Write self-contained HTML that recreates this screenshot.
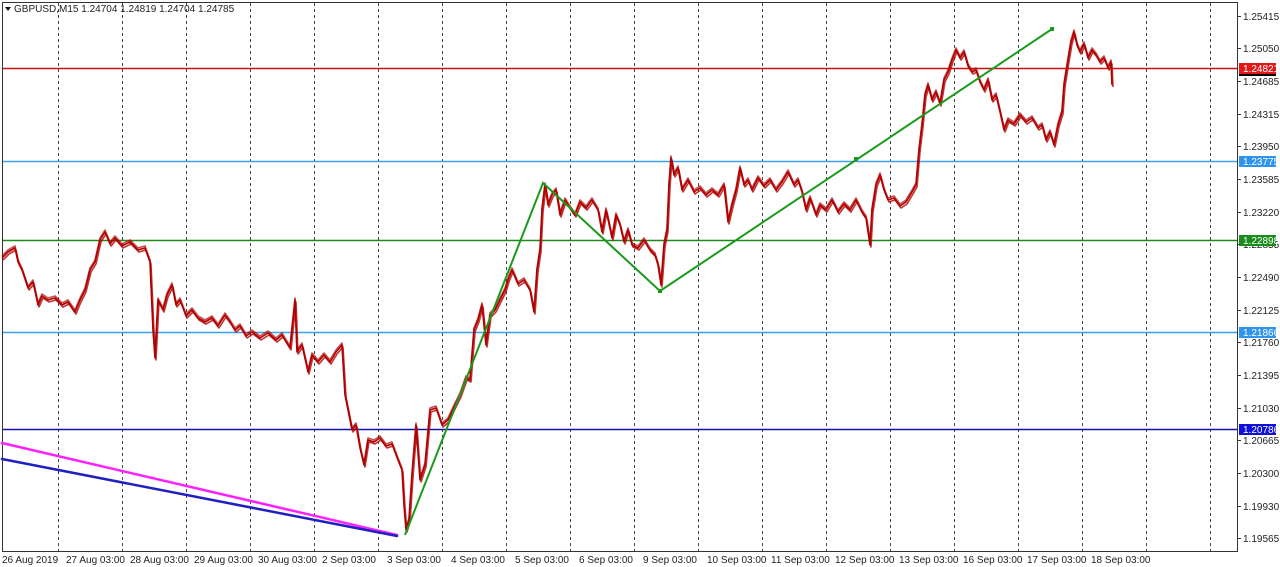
<!DOCTYPE html>
<html><head><meta charset="utf-8"><style>
html,body{margin:0;padding:0;background:#fff;width:1280px;height:567px;overflow:hidden}
svg{display:block}
text{font-family:"Liberation Sans",sans-serif;font-size:10px;fill:#222}
</style></head><body>
<svg width="1280" height="567" viewBox="0 0 1280 567">
<rect x="0" y="0" width="1280" height="567" fill="#fff"/>
<g stroke="#444" stroke-width="1" stroke-dasharray="3,3">
<line x1="58.5" y1="3" x2="58.5" y2="551"/><line x1="122.5" y1="3" x2="122.5" y2="551"/><line x1="186.5" y1="3" x2="186.5" y2="551"/><line x1="250.5" y1="3" x2="250.5" y2="551"/><line x1="314.5" y1="3" x2="314.5" y2="551"/><line x1="378.5" y1="3" x2="378.5" y2="551"/><line x1="442.5" y1="3" x2="442.5" y2="551"/><line x1="506.5" y1="3" x2="506.5" y2="551"/><line x1="570.5" y1="3" x2="570.5" y2="551"/><line x1="634.5" y1="3" x2="634.5" y2="551"/><line x1="698.5" y1="3" x2="698.5" y2="551"/><line x1="762.5" y1="3" x2="762.5" y2="551"/><line x1="826.5" y1="3" x2="826.5" y2="551"/><line x1="890.5" y1="3" x2="890.5" y2="551"/><line x1="954.5" y1="3" x2="954.5" y2="551"/><line x1="1018.5" y1="3" x2="1018.5" y2="551"/><line x1="1082.5" y1="3" x2="1082.5" y2="551"/><line x1="1146.5" y1="3" x2="1146.5" y2="551"/><line x1="1210.5" y1="3" x2="1210.5" y2="551"/>
</g>
<rect x="2.5" y="2.5" width="1235" height="549" fill="none" stroke="#333" stroke-width="1"/>
<line x1="3" y1="68.5" x2="1237" y2="68.5" stroke="#d01010" stroke-width="1.5"/>
<line x1="3" y1="161.5" x2="1237" y2="161.5" stroke="#3fa0e8" stroke-width="1.5"/>
<line x1="3" y1="240.5" x2="1237" y2="240.5" stroke="#1e8a1e" stroke-width="1.5"/>
<line x1="3" y1="332.5" x2="1237" y2="332.5" stroke="#3fa0e8" stroke-width="1.5"/>
<line x1="3" y1="429.5" x2="1237" y2="429.5" stroke="#1010b0" stroke-width="1.5"/>
<g fill="none" stroke-linejoin="round">
<polyline id="p" stroke="#b00000" stroke-width="1.6" points="2,258 8,252 15,248 18,262 22,270 28,288 33,282 38,305 42,296 48,300 55,298 62,305 68,302 75,312 80,300 85,290 90,270 95,262 100,240 105,232 110,244 115,238 122,246 130,242 138,250 145,248 150,262 153,330 155,358 158,300 163,310 167,295 172,285 176,305 180,300 186,316 192,310 198,318 205,322 212,318 218,326 225,315 230,322 235,330 240,326 246,336 252,332 260,338 268,333 276,340 282,335 290,348 295,300 297,352 302,345 308,372 312,355 318,362 324,355 330,362 336,352 342,345 345,395 348,410 352,430 356,425 360,448 364,465 368,440 374,442 380,438 386,446 392,444 398,460 402,470 404,505 406,530 409,520 412,475 416,425 420,480 425,465 430,410 436,408 442,425 448,420 455,405 460,395 466,378 470,380 474,330 478,320 482,305 486,345 490,315 495,310 500,300 505,290 508,280 512,270 518,284 524,280 530,290 534,312 537,270 540,250 542,210 545,185 548,205 552,195 556,190 560,215 565,200 570,208 575,215 580,202 586,208 592,200 598,210 602,232 606,210 612,238 616,215 620,225 624,242 628,230 632,245 638,248 644,240 650,250 655,255 658,265 661,285 664,245 667,230 669,185 671,158 674,175 678,168 682,190 688,180 694,192 700,188 706,195 712,190 718,195 724,185 728,222 732,205 736,190 740,168 744,185 748,180 752,190 758,178 764,186 770,180 776,190 782,182 788,172 794,185 798,180 802,192 806,210 810,198 816,215 820,205 826,210 832,200 838,212 844,204 850,210 856,200 862,212 866,218 870,245 872,210 876,185 880,175 884,190 888,200 894,198 900,206 906,202 912,192 916,185 919,150 922,125 925,95 928,85 932,100 936,92 940,104 944,80 948,72 952,60 956,50 960,58 964,52 968,66 972,72 976,70 980,82 984,90 988,80 992,100 996,95 1000,112 1004,130 1008,120 1014,124 1020,115 1026,122 1032,118 1038,128 1042,125 1046,140 1050,132 1054,145 1058,125 1062,112 1064,85 1068,60 1071,42 1074,32 1077,45 1080,52 1084,44 1088,58 1092,50 1096,55 1100,62 1104,58 1108,68 1111,62 1112,85"/>
<use href="#p" transform="translate(1,2)" stroke-width="1.2" opacity="0.8"/>
<use href="#p" transform="translate(0,-2)" stroke="#e02020" stroke-width="1" opacity="0.7"/>
</g>
<g stroke-linecap="round">
<line x1="2" y1="443" x2="397" y2="535" stroke="#ff20ff" stroke-width="2.5"/>
<line x1="2" y1="459" x2="397" y2="536" stroke="#2020c0" stroke-width="2.5"/>
</g>
<polyline fill="none" stroke="#1a9a1a" stroke-width="2" points="405,535 543,183 660,291 1052,29"/>
<rect x="1050" y="27" width="4" height="4" fill="#1a9a1a"/>
<rect x="658" y="289" width="4" height="4" fill="#1a9a1a"/>
<rect x="854" y="157" width="4" height="4" fill="#1a9a1a"/>
<g stroke="#333" stroke-width="1">
<line x1="1237" y1="16.5" x2="1241" y2="16.5"/><line x1="1237" y1="48.5" x2="1241" y2="48.5"/><line x1="1237" y1="81.5" x2="1241" y2="81.5"/><line x1="1237" y1="114.5" x2="1241" y2="114.5"/><line x1="1237" y1="146.5" x2="1241" y2="146.5"/><line x1="1237" y1="179.5" x2="1241" y2="179.5"/><line x1="1237" y1="212.5" x2="1241" y2="212.5"/><line x1="1237" y1="244.5" x2="1241" y2="244.5"/><line x1="1237" y1="277.5" x2="1241" y2="277.5"/><line x1="1237" y1="310.5" x2="1241" y2="310.5"/><line x1="1237" y1="342.5" x2="1241" y2="342.5"/><line x1="1237" y1="375.5" x2="1241" y2="375.5"/><line x1="1237" y1="408.5" x2="1241" y2="408.5"/><line x1="1237" y1="440.5" x2="1241" y2="440.5"/><line x1="1237" y1="473.5" x2="1241" y2="473.5"/><line x1="1237" y1="506.5" x2="1241" y2="506.5"/><line x1="1237" y1="538.5" x2="1241" y2="538.5"/>
</g>
<g>
<text x="1243" y="20">1.25415</text><text x="1243" y="52">1.25050</text><text x="1243" y="85">1.24685</text><text x="1243" y="118">1.24315</text><text x="1243" y="150">1.23950</text><text x="1243" y="183">1.23585</text><text x="1243" y="216">1.23220</text><text x="1243" y="248">1.22855</text><text x="1243" y="281">1.22490</text><text x="1243" y="314">1.22125</text><text x="1243" y="346">1.21760</text><text x="1243" y="379">1.21395</text><text x="1243" y="412">1.21030</text><text x="1243" y="444">1.20665</text><text x="1243" y="477">1.20300</text><text x="1243" y="510">1.19930</text><text x="1243" y="542">1.19565</text>
</g>
<rect x="1239" y="63" width="37" height="11" fill="#e01818"/><text x="1243" y="72" style="fill:#fff">1.24821</text>
<rect x="1239" y="74" width="37" height="2" fill="#000"/>
<rect x="1239" y="156" width="37" height="11" fill="#2f94ee"/><text x="1243" y="165" style="fill:#fff">1.23775</text>
<rect x="1239" y="235" width="37" height="11" fill="#1a8c1a"/><text x="1243" y="244" style="fill:#fff">1.22898</text>
<rect x="1239" y="327" width="37" height="11" fill="#2f94ee"/><text x="1243" y="336" style="fill:#fff">1.21866</text>
<rect x="1239" y="424" width="37" height="11" fill="#1010d8"/><text x="1243" y="433" style="fill:#fff">1.20786</text>
<g>
<text x="2" y="563">26 Aug 2019</text><text x="66" y="563">27 Aug 03:00</text><text x="130" y="563">28 Aug 03:00</text><text x="194" y="563">29 Aug 03:00</text><text x="258" y="563">30 Aug 03:00</text><text x="322" y="563">2 Sep 03:00</text><text x="387" y="563">3 Sep 03:00</text><text x="451" y="563">4 Sep 03:00</text><text x="515" y="563">5 Sep 03:00</text><text x="579" y="563">6 Sep 03:00</text><text x="643" y="563">9 Sep 03:00</text><text x="707" y="563">10 Sep 03:00</text><text x="771" y="563">11 Sep 03:00</text><text x="835" y="563">12 Sep 03:00</text><text x="899" y="563">13 Sep 03:00</text><text x="963" y="563">16 Sep 03:00</text><text x="1027" y="563">17 Sep 03:00</text><text x="1091" y="563">18 Sep 03:00</text>
</g>
<path d="M5,7 L11,7 L8,11 Z" fill="#111"/>
<text x="14" y="12">GBPUSD,M15  1.24704 1.24819 1.24704 1.24785</text>
</svg>
</body></html>
